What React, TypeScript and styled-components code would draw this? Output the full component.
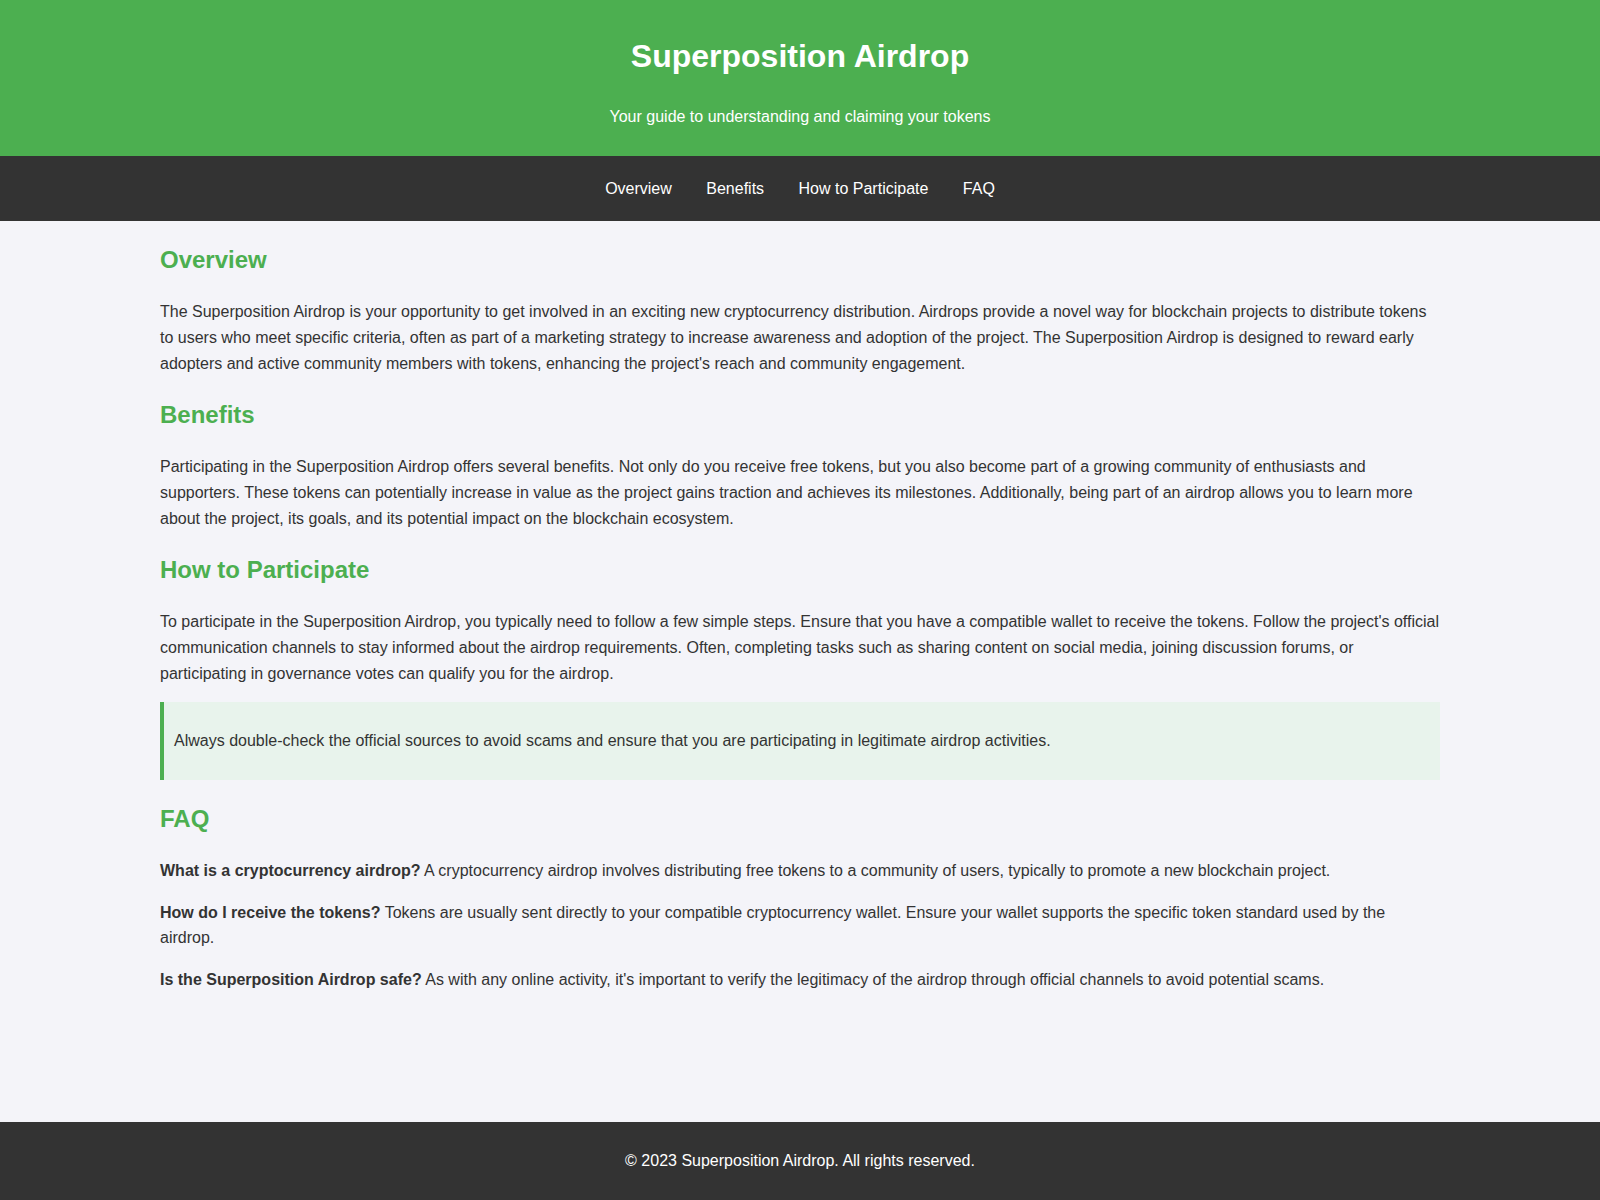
import React from 'react';
import styled, {createGlobalStyle} from 'styled-components';

const GlobalStyle = createGlobalStyle`
    html, body {
        margin: 0;
        padding: 0;
    }
    body {
        font-family: "Liberation Sans", Arial, sans-serif;
        font-size: 16px;
        line-height: 1.6;
        color: #333;
        background: #f4f4f9;
    }
`;

const Page = styled.div`
    display: flex;
    flex-direction: column;
    min-height: 100vh;
`;

const Header = styled.header`
    background: #4caf50;
    color: #fff;
    text-align: center;
    padding: 10px 0;
`;

const Title = styled.h1`
    font-size: 32px;
    margin: 21.44px 0;
`;

const Tagline = styled.p`
    margin: 16px 0;
`;

const Nav = styled.nav`
    background: #333;
    text-align: center;
    padding: 20px 0;
`;

const NavLink = styled.a`
    color: #fff;
    text-decoration: none;
    margin: 0 15px;
`;

const Main = styled.main`
    flex: 1;
    width: 80%;
    margin: 0 auto;
    padding-bottom: 20px;
`;

const Section = styled.section``;

const Heading = styled.h2`
    color: #4caf50;
    font-size: 24px;
    margin: 19.92px 0;
`;

const Text = styled.p`
    margin: 16px 0;
`;

const Note = styled.blockquote`
    margin: 15px 0;
    padding: 10px;
    background: #e8f3ec;
    border-left: 4px solid #4caf50;
`;

const Question = styled.strong`
    font-weight: 700;
`;

const Footer = styled.footer`
    background: #333;
    color: #fff;
    text-align: center;
    padding: 10px 0;
`;

const links = ['Overview', 'Benefits', 'How to Participate', 'FAQ'];

const faqs = [
    {
        q: 'What is a cryptocurrency airdrop?',
        a: 'A cryptocurrency airdrop involves distributing free tokens to a community of users, typically to promote a new blockchain project.',
    },
    {
        q: 'How do I receive the tokens?',
        a: 'Tokens are usually sent directly to your compatible cryptocurrency wallet. Ensure your wallet supports the specific token standard used by the airdrop.',
    },
    {
        q: 'Is the Superposition Airdrop safe?',
        a: "As with any online activity, it's important to verify the legitimacy of the airdrop through official channels to avoid potential scams.",
    },
];

const App = () => {
    return (
        <Page>
            <GlobalStyle/>
            <Header>
                <Title>Superposition Airdrop</Title>
                <Tagline>Your guide to understanding and claiming your tokens</Tagline>
            </Header>
            <Nav>
                {links.map((label, index) => (
                    <React.Fragment key={label}>
                        {index > 0 && ' '}
                        <NavLink href={'#' + label.toLowerCase().replace(/ /g, '-')}>{label}</NavLink>
                    </React.Fragment>
                ))}
            </Nav>
            <Main>
                <Section id="overview">
                    <Heading>Overview</Heading>
                    <Text>
                        The Superposition Airdrop is your opportunity to get involved in an exciting new cryptocurrency
                        distribution. Airdrops provide a novel way for blockchain projects to distribute tokens to users
                        who meet specific criteria, often as part of a marketing strategy to increase awareness and
                        adoption of the project. The Superposition Airdrop is designed to reward early adopters and active
                        community members with tokens, enhancing the project's reach and community engagement.
                    </Text>
                </Section>
                <Section id="benefits">
                    <Heading>Benefits</Heading>
                    <Text>
                        Participating in the Superposition Airdrop offers several benefits. Not only do you receive free
                        tokens, but you also become part of a growing community of enthusiasts and supporters. These tokens
                        can potentially increase in value as the project gains traction and achieves its milestones.
                        Additionally, being part of an airdrop allows you to learn more about the project, its goals, and
                        its potential impact on the blockchain ecosystem.
                    </Text>
                </Section>
                <Section id="how-to-participate">
                    <Heading>How to Participate</Heading>
                    <Text>
                        To participate in the Superposition Airdrop, you typically need to follow a few simple steps. Ensure
                        that you have a compatible wallet to receive the tokens. Follow the project's official
                        communication channels to stay informed about the airdrop requirements. Often, completing tasks
                        such as sharing content on social media, joining discussion forums, or participating in governance
                        votes can qualify you for the airdrop.
                    </Text>
                    <Note>
                        <Text>
                            Always double-check the official sources to avoid scams and ensure that you are participating in
                            legitimate airdrop activities.
                        </Text>
                    </Note>
                </Section>
                <Section id="faq">
                    <Heading>FAQ</Heading>
                    {faqs.map((item) => (
                        <Text key={item.q}>
                            <Question>{item.q}</Question> {item.a}
                        </Text>
                    ))}
                </Section>
            </Main>
            <Footer>
                <Text>&copy; 2023 Superposition Airdrop. All rights reserved.</Text>
            </Footer>
        </Page>
    );
};

export default App;
